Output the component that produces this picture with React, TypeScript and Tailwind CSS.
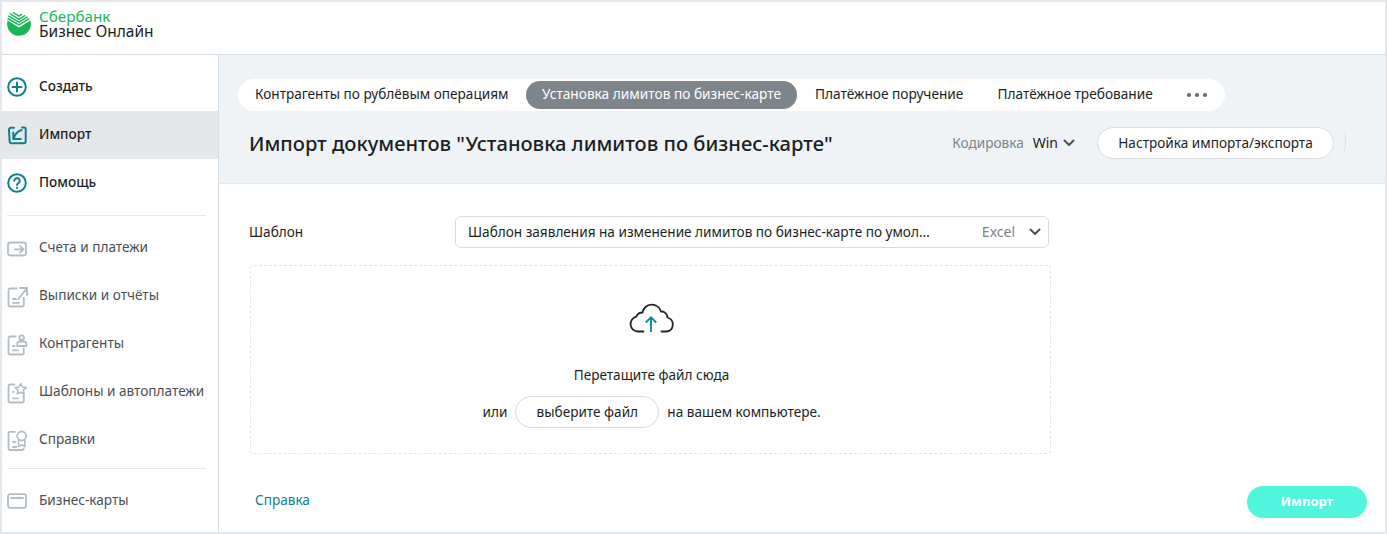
import React from "react";

const tealIcon = "#107f8c";
const grayIcon = "#b2bcc5";

function Svg({ children, color }: { children: React.ReactNode; color: string }) {
  return (
    <svg width="24" height="24" viewBox="0 0 24 24" fill="none" stroke={color} strokeWidth="1.8" strokeLinecap="round" strokeLinejoin="round" className="shrink-0">
      {children}
    </svg>
  );
}

const icons: Record<string, React.ReactNode> = {
  create: (
    <Svg color={tealIcon}>
      <circle cx="12" cy="12" r="8.8" strokeWidth="2" />
      <path d="M12 7.5v9M7.5 12h9" strokeWidth="2" />
    </Svg>
  ),
  import: (
    <Svg color={tealIcon}>
      <path d="M9 4.7H6a2 2 0 0 0-2 2.3l.7 12a1.7 1.7 0 0 0 1.7 1.3H19a1.7 1.7 0 0 0 1.7-1.7V6.3a1.7 1.7 0 0 0-1.7-1.7h-2" strokeWidth="2" />
      <path d="M16.700 7c-3.700 1-6.700 4-8 8.500" strokeWidth="2" />
      <path d="M8.300 9.500v6.500h7.500" strokeWidth="2" />
    </Svg>
  ),
  help: (
    <Svg color={tealIcon}>
      <circle cx="12" cy="12" r="8.8" strokeWidth="2" />
      <path d="M9.300 9.800a2.700 2.700 0 1 1 4.200 2.300c-1 .6-1.500 1-1.500 2" strokeWidth="2" />
      <path d="M12 16.800v.1" strokeWidth="2.200" />
    </Svg>
  ),
  accounts: (
    <Svg color={grayIcon}>
      <rect x="3" y="6.500" width="18" height="13" rx="2.500" />
      <path d="M10 13.300h8.500M15 10l3.500 3.300-3.500 3.300" />
    </Svg>
  ),
  reports: (
    <Svg color={grayIcon}>
      <path d="M11.500 4.500H5a1.500 1.500 0 0 0-1.500 1.500v15a1.500 1.500 0 0 0 1.500 1.500h12.300a1.500 1.500 0 0 0 1.500-1.500v-7" />
      <path d="M13.300 15L22 4.300M15 4h7v7" />
      <path d="M8 15h3M8 18.800h6.300" />
    </Svg>
  ),
  contractors: (
    <Svg color={grayIcon}>
      <path d="M10.500 4.500H5A1.500 1.500 0 0 0 3.500 6v15A1.500 1.500 0 0 0 5 22.500h12.300a1.500 1.500 0 0 0 1.500-1.500v-4.500" />
      <circle cx="16.700" cy="5.700" r="2.300" />
      <path d="M12.300 14v-2.500a1.800 1.800 0 0 1 1.800-1.800h5.400a1.800 1.800 0 0 1 1.800 1.800V14z" />
      <path d="M8 14h1.500M8 18.300h5" />
    </Svg>
  ),
  templates: (
    <Svg color={grayIcon}>
      <path d="M9.500 4.500H5A1.500 1.500 0 0 0 3.500 6v15A1.500 1.500 0 0 0 5 22.500h12.300a1.500 1.500 0 0 0 1.500-1.500v-6" />
      <path d="M15.700 3.500l1.700 3.500 3.800.6-2.800 2.600.7 3.800-3.400-1.800-3.400 1.800.7-3.800-2.800-2.600 3.800-.6z" strokeWidth="1.600" />
      <path d="M8 12h.6M8 18.300h5" />
    </Svg>
  ),
  certificates: (
    <Svg color={grayIcon}>
      <path d="M10 3.800H5A1.500 1.500 0 0 0 3.500 5.300V20.500A1.500 1.500 0 0 0 5 22h12.300a1.500 1.500 0 0 0 1.500-1.500" />
      <circle cx="16.700" cy="8" r="4.500" />
      <path d="M13.500 12v6.500l3.200-1.700 3.200 1.700V12" strokeWidth="1.600" />
      <path d="M8 14h2.500M8 19h3.500" />
    </Svg>
  ),
  cards: (
    <Svg color={grayIcon}>
      <rect x="3" y="5.200" width="18" height="13.600" rx="2" />
      <path d="M6 9h12" />
    </Svg>
  ),
};

function NavItem({ icon, label, bold, active }: { icon: string; label: string; bold?: boolean; active?: boolean }) {
  return (
    <div className={`h-12 flex items-center pl-[3px] gap-2.5 text-[13.600px] ${active ? "bg-[#e4e8eb]" : ""} ${bold ? "font-medium text-[#1b1f23]" : "text-[#4a4f54]"}`}>
      {icons[icon]}
      <span className="pb-[2px] whitespace-nowrap">{label}</span>
    </div>
  );
}

function Chevron() {
  return (
    <svg width="12" height="8" viewBox="0 0 12 8" fill="none" stroke="#4a5158" strokeWidth="2" strokeLinecap="round" strokeLinejoin="round">
      <path d="M1.500 1.500L6 6l4.500-4.500" />
    </svg>
  );
}

export default function App() {
  return (
    <div
      className="w-[1387px] h-[534px] border-2 border-[#e4e8eb] bg-white overflow-hidden flex flex-col text-[#1b1f23]"
      style={{ fontFamily: '"Noto Sans", sans-serif' }}
    >
      <header className="h-[53px] shrink-0 border-b border-[#d5dce2] flex items-center pl-[5px] gap-2 pb-2">
        <svg width="24" height="24" viewBox="0 0 24 24" className="shrink-0">
          <path d="M.6 8.500A11.900 11.900 0 1 0 23.900 12c0-1.200-.2-2.300-.5-3.400L12 15.500z" fill="#18b85a" />
          <path d="M.6 6.500L12 13 22.300 6.700M1.200 3.800L12 10.200 20.400 4.800M3 1.600L12 7.300l6.200-4M6 .4L12 4.200l3-2" stroke="#18b85a" strokeWidth="1.500" fill="none" />
        </svg>
        <div className="flex flex-col leading-[15px]">
          <span className="text-[15.200px] text-[#16b85c]">Сбербанк</span>
          <span className="text-[15.500px] text-[#1b1f23]">Бизнес Онлайн</span>
        </div>
      </header>
      <div className="flex flex-1 min-h-0">
        <aside className="w-[217px] shrink-0 border-r border-[#d5dce2] pt-2">
          <NavItem icon="create" label="Создать" bold />
          <NavItem icon="import" label="Импорт" bold active />
          <NavItem icon="help" label="Помощь" bold />
          <div className="mx-[5px] mt-2 mb-2 h-px bg-[#e4e8eb] w-[199px]" />
          <NavItem icon="accounts" label="Счета и платежи" />
          <NavItem icon="reports" label="Выписки и отчёты" />
          <NavItem icon="contractors" label="Контрагенты" />
          <NavItem icon="templates" label="Шаблоны и автоплатежи" />
          <NavItem icon="certificates" label="Справки" />
          <div className="mx-[5px] mt-[4px] mb-2 h-px bg-[#e4e8eb] w-[199px]" />
          <NavItem icon="cards" label="Бизнес-карты" />
        </aside>
        <main className="flex-1 min-w-0 flex flex-col">
          <section className="h-[129px] shrink-0 bg-[#eff3f6] border-b border-[#e4e8eb] pt-6 pl-[19px] overflow-hidden">
            <div className="w-[987px] h-8 bg-white rounded-full flex items-center text-[13.700px] pl-[2px]">
              <span className="w-[286px] pl-[15px] pb-[2px] text-[13.600px] whitespace-nowrap">Контрагенты по рублёвым операциям</span>
              <span className="h-7 w-[271px] rounded-full bg-[#7d848a] text-white flex items-center justify-center pb-[2px] whitespace-nowrap">Установка лимитов по бизнес-карте</span>
              <span className="ml-[18px] pb-[2px] whitespace-nowrap">Платёжное поручение</span>
              <span className="ml-[34px] pb-[2px] whitespace-nowrap">Платёжное требование</span>
              <span className="ml-[34px] flex gap-[4px]">
                <i className="w-1 h-1 rounded-full bg-[#62686e]" />
                <i className="w-1 h-1 rounded-full bg-[#62686e]" />
                <i className="w-1 h-1 rounded-full bg-[#62686e]" />
              </span>
            </div>
            <div className="flex items-center mt-4 pl-[11px] pr-[39px] h-8">
              <h1 className="text-[20.150px] font-medium whitespace-nowrap">Импорт документов "Установка лимитов по бизнес-карте"</h1>
              <span className="ml-auto text-[13.600px] text-[#7d848a]">Кодировка</span>
              <span className="ml-[9px] text-sm flex items-center gap-[5px]">Win <Chevron /></span>
              <button className="ml-[22px] w-[237px] h-8 bg-white rounded-full border border-[#d5dce2] text-[13.600px]">Настройка импорта/экспорта</button>
              <span className="ml-[8px] w-[4px] h-[22px] rounded-tr-[4px_11px] rounded-br-[4px_11px] border-r border-[#d5dce2]" />
            </div>
          </section>
          <section className="flex-1 flex flex-col pl-[30px] pr-[18px] min-h-0">
            <div className="w-[800px] flex items-center mt-8 h-8 text-[13.600px]">
              <span className="w-[206px] pt-px">Шаблон</span>
              <div className="w-[594px] h-8 rounded-md border border-[#d5dce2] flex items-center pl-3 pr-[7px]">
                <span className="whitespace-nowrap">Шаблон заявления на изменение лимитов по бизнес-карте по умол…</span>
                <span className="ml-auto text-sm text-[#7d848a]">Excel</span>
                <span className="ml-[14px]"><Chevron /></span>
              </div>
            </div>
            <div className="w-[801px] h-[189px] mt-[17px] ml-px border border-dashed border-[#e0e4e8] rounded flex flex-col items-center text-[13.600px]">
              <svg width="46" height="30" viewBox="0 0 46 30" fill="none" className="mt-[37px]">
                <path transform="translate(1.500 0)" d="M14 28.500H8.500a7.500 7.500 0 0 1-1.700-14.800A6.500 6.500 0 0 1 13 9.500 9.500 9.500 0 0 1 31.500 8.500a6 6 0 0 1 6.500 6A7.200 7.200 0 0 1 37.500 28.500H32" stroke="#22262a" strokeWidth="1.800" strokeLinecap="round" />
                <path d="M23 29V14.500M17.800 19.500l5.200-5.200 5.200 5.200" stroke="#0f8a97" strokeWidth="1.900" />
              </svg>
              <div className="mt-[32px] h-5 leading-5 pl-[2px]">Перетащите файл сюда</div>
              <div className="flex items-center mt-[11px] pl-[2px]">
                <span>или</span>
                <button className="w-[144px] h-8 mx-2 rounded-full border border-[#d5dce2] bg-white">выберите файл</button>
                <span>на вашем компьютере.</span>
              </div>
            </div>
            <div className="flex items-center justify-between mt-8 h-8 text-[13.600px]">
              <a className="ml-[6px] pb-[4px] text-[#107f8c]">Справка</a>
              <button className="w-[120px] h-8 rounded-full bg-[#4ff5dc] text-white text-[13px] font-bold">Импорт</button>
            </div>
          </section>
        </main>
      </div>
    </div>
  );
}
